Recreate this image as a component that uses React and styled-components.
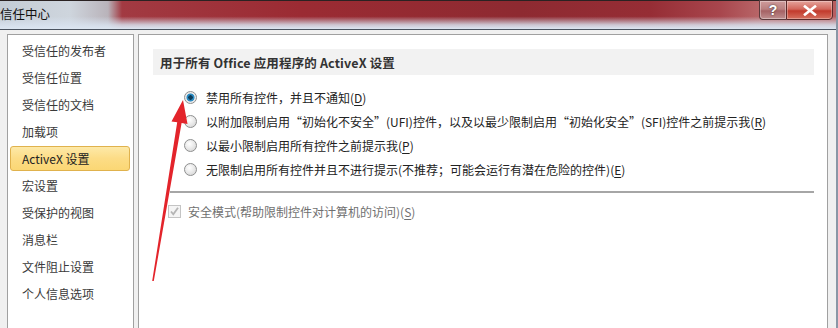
import styled, { createGlobalStyle } from "styled-components";

const GlobalStyle = createGlobalStyle`
  html, body {
    margin: 0;
    padding: 0;
    overflow: hidden;
    background: #f0f0f0;
  }
  * { box-sizing: border-box; }
`;

const navItems = [
  "受信任的发布者",
  "受信任位置",
  "受信任的文档",
  "加载项",
  "ActiveX 设置",
  "宏设置",
  "受保护的视图",
  "消息栏",
  "文件阻止设置",
  "个人信息选项",
];

const options = [
  { label: "禁用所有控件，并且不通知", key: "D", checked: true },
  { label: "以附加限制启用“初始化不安全”(UFI)控件，以及以最少限制启用“初始化安全”(SFI)控件之前提示我", key: "R" },
  { label: "以最小限制启用所有控件之前提示我", key: "P" },
  { label: "无限制启用所有控件并且不进行提示(不推荐；可能会运行有潜在危险的控件)", key: "E" },
];

const App = () => {
  return (
    <>
      <GlobalStyle />
      <Window>
        <TitleBar>
          <Title>信任中心</Title>
          <Controls>
            <HelpButton>?</HelpButton>
            <CloseButton>
              <svg width="14" height="11" viewBox="0 0 14 11">
                <path d="M2 1.5 L12 9.5 M12 1.5 L2 9.5" stroke="#fff" strokeWidth="2.6" strokeLinecap="square" />
              </svg>
            </CloseButton>
          </Controls>
        </TitleBar>
        <Body>
          <NavList>
            {navItems.map((item, i) => (
              <NavItem key={item} $active={i === 4}>{item}</NavItem>
            ))}
          </NavList>
          <Content>
            <SectionHeader>用于所有 Office 应用程序的 ActiveX 设置</SectionHeader>
            <OptionList>
              {options.map((o) => (
                <OptionRow key={o.key}>
                  <Radio $checked={o.checked} />
                  <span>{o.label}(<u>{o.key}</u>)</span>
                </OptionRow>
              ))}
            </OptionList>
            <Separator />
            <CheckRow>
              <CheckBox>
                <svg width="11" height="11" viewBox="0 0 11 11">
                  <path d="M2 5.5 L4.3 8.3 L9 1.8" fill="none" stroke="#b4b4b4" strokeWidth="1.8" />
                </svg>
              </CheckBox>
              <span>安全模式(帮助限制控件对计算机的访问)(<u>S</u>)</span>
            </CheckRow>
          </Content>
        </Body>
        <Arrow width="838" height="328" viewBox="0 0 838 328">
          <polygon
            points="183,100 187.5,124 181.6,123.1 153.8,281 152.2,281 177.2,122.3 171.5,121.4"
            fill="#e3242b"
          />
        </Arrow>
      </Window>
    </>
  );
};

const Window = styled.div`
  position: relative;
  width: 838px;
  height: 328px;
  display: flex;
  flex-direction: column;
  overflow: hidden;
  font-family: "Noto Sans CJK SC", "Noto Sans", sans-serif;
  border-right: 2px solid #8a97a6;
`;

const TitleBar = styled.div`
  height: 30px;
  display: flex;
  justify-content: space-between;
  align-items: flex-start;
  border-bottom: 1px solid #4a5360;
  border-top: 1px solid #2a2222;
  background:
    linear-gradient(180deg, rgba(255,255,255,0) 0%, rgba(255,255,255,0) 55%, rgba(215,225,238,0.85) 85%, rgba(220,230,242,1) 100%),
    linear-gradient(90deg, #c4ccd5 0px, #ced5dd 70px, #b9b3ba 108px, #a23a42 122px, #9b2b33 300px, #8e2a31 520px, #962d35 650px, #a8464d 720px, #b86668 760px, #b85e60 838px);
`;

const Title = styled.div`
  font-size: 12.5px;
  line-height: 20px;
  padding-top: 3px;
  color: #111;
`;

const Controls = styled.div`
  display: flex;
  margin-right: 3px;
  margin-top: -1px;
`;

const HelpButton = styled.div`
  width: 27px;
  height: 20px;
  display: flex;
  align-items: center;
  justify-content: center;
  font-family: "Liberation Sans", sans-serif;
  font-weight: bold;
  font-size: 14px;
  color: #fff;
  text-shadow: 0 0 2px #333;
  border: 1px solid #5a3a3c;
  border-right: none;
  border-radius: 0 0 0 4px;
  background: linear-gradient(180deg, #cf9c9c 0%, #b98080 45%, #a56264 55%, #bf8f8f 100%);
  box-shadow: inset 0 0 0 1px rgba(255,255,255,0.35);
`;

const CloseButton = styled.div`
  width: 47px;
  height: 20px;
  display: flex;
  align-items: center;
  justify-content: center;
  border: 1px solid #5a2a2a;
  border-radius: 0 0 4px 0;
  background: linear-gradient(180deg, #e5a49c 0%, #d2675c 45%, #c23a2c 55%, #d6705f 100%);
  box-shadow: inset 0 0 0 1px rgba(255,255,255,0.3);
`;

const Body = styled.div`
  flex: 1;
  display: flex;
  gap: 4px;
  padding: 4px 8px 0 7px;
  background: #f0f0f0;
  min-height: 0;
`;

const NavList = styled.ul`
  width: 127px;
  margin: 0;
  padding: 3px 0 0;
  list-style: none;
  background: #fff;
  border: 1px solid #a0a0a0;
  border-bottom: none;
  display: flex;
  flex-direction: column;
  gap: 2px;
`;

const NavItem = styled.li`
  height: 25px;
  margin: 0 3px 0 2px;
  padding-left: 11px;
  display: flex;
  align-items: center;
  font-size: 12px;
  border-radius: 3px;
  border: 1px solid ${({ $active }) => ($active ? "#e0b24d" : "transparent")};
  background: ${({ $active }) =>
    $active ? "linear-gradient(180deg, #fde9a8 0%, #fcdc86 50%, #fbd774 100%)" : "transparent"};
  color: ${({ $active }) => ($active ? "#222" : "#3a3a3a")};
`;

const Content = styled.div`
  flex: 1;
  background: #fff;
  border: 1px solid #a0a0a0;
  border-bottom: none;
  padding: 14px 13px 0 14px;
  display: flex;
  flex-direction: column;
`;

const SectionHeader = styled.div`
  height: 26px;
  display: flex;
  align-items: center;
  padding-left: 7px;
  background: #f2f2f2;
  font-size: 12.5px;
  font-weight: bold;
  letter-spacing: 0.15px;
  color: #333;
`;

const OptionList = styled.div`
  display: flex;
  flex-direction: column;
  margin: 10px 0 0 31px;
`;

const OptionRow = styled.div`
  height: 24px;
  display: flex;
  align-items: center;
  gap: 9px;
  font-size: 12px;
  color: #222;
  white-space: nowrap;

  u { text-underline-offset: 2px; }
`;

const Radio = styled.span`
  width: 13px;
  height: 13px;
  border-radius: 50%;
  flex-shrink: 0;
  border: 1px solid #8e8f8f;
  background: ${({ $checked }) =>
    $checked
      ? "radial-gradient(circle, #0d3c59 0 2px, #2b8cc4 2.5px 3.6px, #e8e8e8 4.4px, #f6f6f6 100%)"
      : "radial-gradient(circle at 40% 35%, #ffffff 0%, #e6e6e6 55%, #cfcfcf 100%)"};
`;

const Separator = styled.div`
  margin: 10px 0 0 17px;
  height: 2px;
  background: #a6a6a6;
`;

const CheckRow = styled.div`
  height: 24px;
  margin: 6px 0 0 15px;
  display: flex;
  align-items: center;
  gap: 7px;
  font-size: 12px;
  color: #707070;

  u { text-underline-offset: 2px; }
`;

const CheckBox = styled.span`
  width: 13px;
  height: 13px;
  flex-shrink: 0;
  border: 1px solid #c4c4c4;
  background: #f4f4f4;
  display: flex;
  align-items: center;
  justify-content: center;
`;

const Arrow = styled.svg`
  position: absolute;
  left: 0;
  top: 0;
  pointer-events: none;
`;

export default App;
